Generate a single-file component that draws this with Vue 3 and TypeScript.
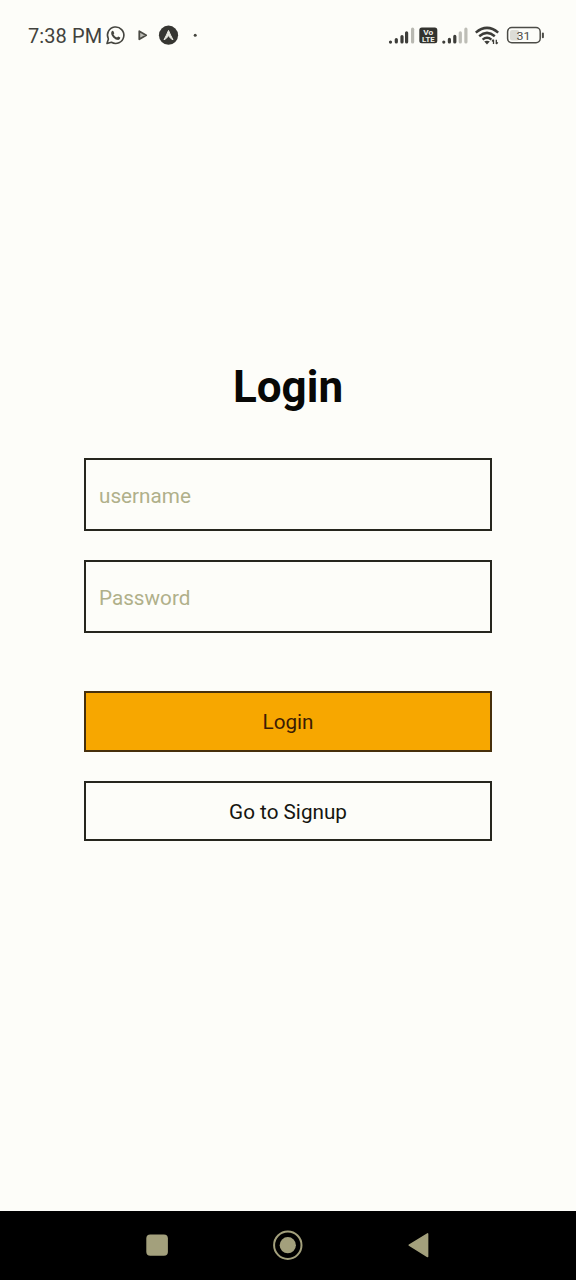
<script setup lang="ts">
import { ref } from 'vue'

const username = ref('')
const password = ref('')
</script>

<template>
  <div class="screen">
    <header class="status">
      <span class="time">7:38 PM</span>
      <svg class="notifications" width="100" height="24" viewBox="104 23 100 24">
        <path d="M107 43.5 L108.4 39 A8.2 8.2 0 1 1 111.4 42.2 Z" fill="none" stroke="#45453f" stroke-width="1.6" stroke-linejoin="round" />
        <path d="M111.6 31.4 Q112.4 30.4 113.3 31.1 L114.3 33.3 L113.5 34.5 Q114.8 36.8 117 37.6 L118.2 36.5 L120.3 37.6 Q120.5 39.2 118.3 40 Q115.8 40 113.2 37.4 Q110.2 33.9 111.6 31.4Z" fill="#45453f" />
        <path d="M139.3 31.2 L146.2 35.2 L139.3 39.2Z" fill="#bdbdb7" stroke="#4b4b45" stroke-width="1.8" stroke-linejoin="round" />
        <circle cx="168.5" cy="35.2" r="9.6" fill="#363632" />
        <path d="M164 39.8 Q166.6 35 168.5 30.4 Q170.4 35 173 39.8 Q170.5 39 168.5 35.6 Q166.5 39 164 39.8Z" fill="#e8e8e0" stroke="#e8e8e0" stroke-width="1" />
        <circle cx="195.2" cy="35.2" r="1.5" fill="#45453f" />
      </svg>
      <svg class="system" width="160" height="26" viewBox="387 22 160 26">
        <g stroke-width="3.2" stroke-linecap="round" stroke="#3d3d39">
          <path d="M390.5 42V42.1M396.3 39.6V42M402 36.6V42M406.6 32.8V42" />
          <path d="M412.6 29.2V42" stroke="#b9b9b2" />
          <path d="M443.8 42V42.1M449.4 39.4V42M454.8 36.4V42" />
          <path d="M460.3 32.8V42M465.9 29.2V42" stroke="#bdbdb6" />
        </g>
        <rect x="419.3" y="27.4" width="18" height="15.8" rx="2.5" fill="#33332f" />
        <text x="428.3" y="34.5" text-anchor="middle" class="volte" textLength="10" lengthAdjust="spacingAndGlyphs">Vo</text>
        <text x="428.3" y="41.6" text-anchor="middle" class="volte" textLength="12.5" lengthAdjust="spacingAndGlyphs">LTE</text>
        <g fill="none" stroke="#3d3d39" stroke-width="2.5">
          <path d="M475.8 32.6 Q487 23.2 498.2 32.6" />
          <path d="M479.2 36.2 Q487 29.6 494.8 36.2" />
          <path d="M482.6 39.6 Q487 36 491.4 39.6" />
        </g>
        <path d="M484.2 41.6 Q487 39.8 489.8 41.6 L487 44.4Z" fill="#3d3d39" />
        <path d="M493.5 44V39.8M492 41.3L493.5 39.5M496.3 39.8V44M496.3 44L497.8 42.4" fill="none" stroke="#3d3d39" stroke-width="1.3" />
        <rect x="507.6" y="27.6" width="32.6" height="15.2" rx="4.2" fill="none" stroke="#4c4c47" stroke-width="1.5" />
        <rect x="510" y="30" width="9.2" height="10.4" rx="2" fill="#dcdcd6" />
        <path d="M542.9 33.4V37.2" stroke="#4c4c47" stroke-width="2" stroke-linecap="round" />
        <text x="523.6" y="39.7" text-anchor="middle" class="charge" textLength="14" lengthAdjust="spacingAndGlyphs">31</text>
      </svg>
    </header>

    <main class="form">
      <h1>Login</h1>
      <input v-model="username" class="field" type="text" placeholder="username" />
      <input v-model="password" class="field" type="password" placeholder="Password" />
      <button class="action primary" type="button">Login</button>
      <button class="action secondary" type="button">Go to Signup</button>
    </main>

    <nav class="navigation">
      <svg width="576" height="69" viewBox="0 1211 576 69" fill="#a3a07c">
        <rect x="146.3" y="1234.6" width="21.6" height="21.2" rx="4" />
        <circle cx="287.8" cy="1245.2" r="13.7" fill="none" stroke="#a3a07c" stroke-width="2" />
        <circle cx="287.8" cy="1245.2" r="8.1" />
        <path d="M409.2 1245.2L427.6 1233.8V1256.6Z" stroke="#a3a07c" stroke-width="1.5" stroke-linejoin="round" />
      </svg>
    </nav>
  </div>
</template>

<style>
body {
  margin: 0;
}
</style>

<style scoped>
.screen {
  width: 576px;
  height: 1280px;
  display: flex;
  flex-direction: column;
  overflow: hidden;
  background: #fdfdf9;
  font-family: Roboto, "Liberation Sans", sans-serif;
}

.status {
  box-sizing: border-box;
  height: 72px;
  padding: 0 29px 0 28px;
  display: flex;
  align-items: center;
}

.time {
  width: 76px;
  color: #42423d;
  font-size: 20px;
  letter-spacing: 0.1px;
  line-height: 24px;
  white-space: nowrap;
}

.notifications,
.system {
  flex: none;
  display: block;
  margin-top: -2px;
}

.system {
  margin-left: auto;
}

.volte {
  fill: #f0f0e8;
  font-size: 7px;
  font-weight: 700;
}

.charge {
  fill: #4c4c47;
  font-size: 11.5px;
}

.form {
  flex: 1;
  width: 408px;
  margin: 0 auto;
  padding-top: 289px;
  display: flex;
  flex-direction: column;
}

h1 {
  margin: 0 0 45px;
  color: #080806;
  font-size: 44px;
  font-weight: 700;
  line-height: 52px;
  text-align: center;
}

.field,
.action {
  box-sizing: border-box;
  width: 100%;
  border: 2px solid #26261e;
  border-radius: 0;
  background: transparent;
  font: 400 20.7px/24px Roboto, "Liberation Sans", sans-serif;
  color: #151510;
  outline: none;
}

.field {
  height: 73px;
  padding: 3px 13px 0;
  margin-bottom: 29px;
}

.field::placeholder {
  color: #b0b08a;
  opacity: 1;
}

.action {
  height: 61px;
  padding: 1px 0 0;
}

.primary {
  margin: 29px 0;
  border-color: #47300c;
  background: #f7a700;
  color: #3c1c04;
}

.secondary {
  height: 60px;
}

.navigation {
  height: 69px;
  background: #000;
}

.navigation svg {
  display: block;
}
</style>
